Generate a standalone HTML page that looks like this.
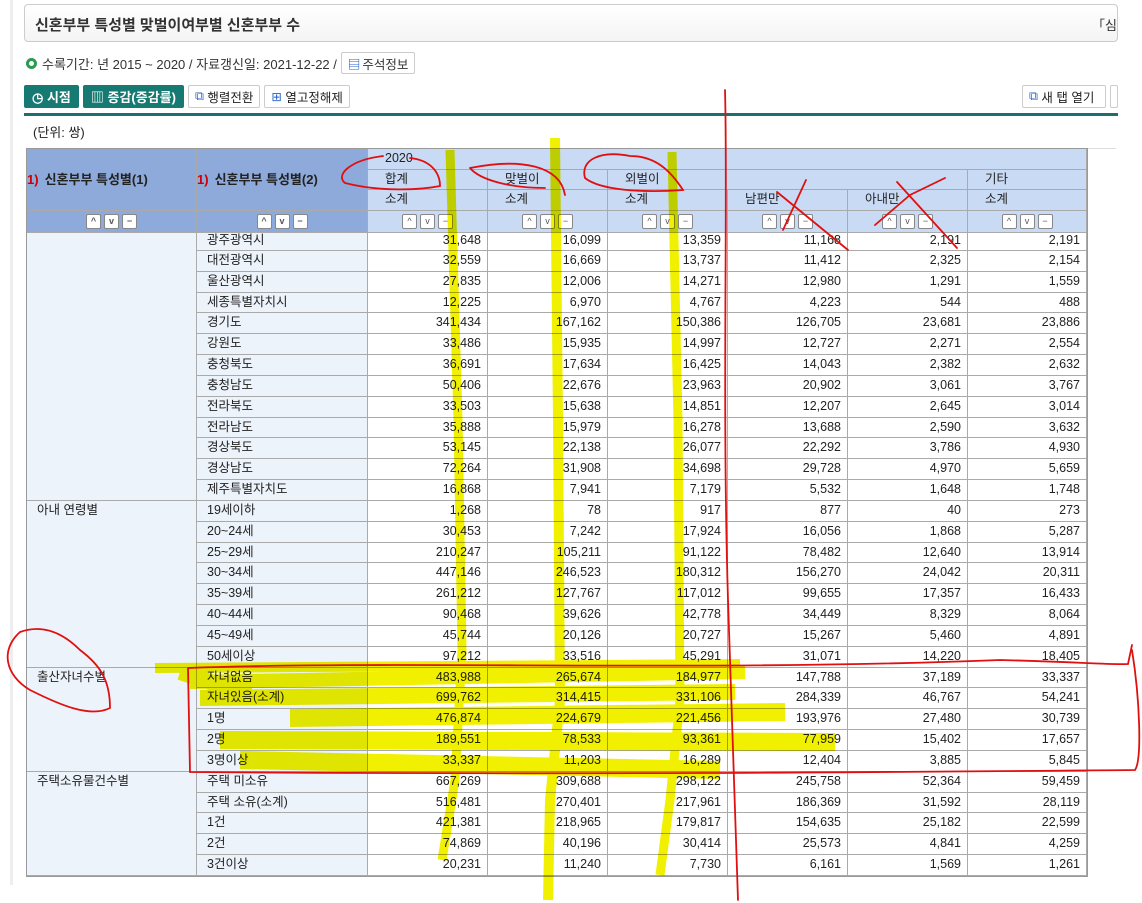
<!DOCTYPE html>
<html><head><meta charset="utf-8">
<style>
*{box-sizing:border-box;margin:0;padding:0}
body{width:1142px;height:903px;overflow:hidden;background:#fff;font-family:"Liberation Sans","Noto Sans CJK KR",sans-serif;color:#222;position:relative}
.strip{position:absolute;left:10px;top:0;width:3px;height:885px;background:#eee}
.title{position:absolute;left:24px;top:4px;width:1094px;height:38px;border:1px solid #ccc;border-radius:4px;background:linear-gradient(#fff,#f4f4f4);font-size:15px;font-weight:bold;padding:9px 10px;color:#333}
.title .r{position:absolute;right:0;top:10px;font-weight:normal;font-size:13px}
.info{position:absolute;left:26px;top:52px;font-size:13px;color:#333;display:flex;align-items:center}
.dot{width:11px;height:11px;border:3px solid #2a9a5a;border-radius:50%;margin-right:5px}
.btnw{border:1px solid #ccc;border-radius:2px;background:#fff;font-size:12.5px;padding:2px 6px;margin-left:4px;height:22px;display:inline-flex;align-items:center}
.tb{position:absolute;top:85px;display:flex;gap:4px}
.g{background:#167a73;color:#fff;font-weight:bold;font-size:13px;height:23px;padding:0 8px;display:flex;align-items:center;border-radius:2px}
.w{background:#fff;border:1px solid #ccc;font-size:12.5px;height:23px;padding:0 6px;display:flex;align-items:center;border-radius:2px}
.line{position:absolute;left:24px;top:113px;width:1094px;height:3px;background:#1d6f6e}
.unit{position:absolute;left:33px;top:122px;font-size:13px}
.hr{position:absolute;left:26px;top:148px;width:1090px;height:1px;background:#ddd}
.tbl{position:absolute;left:26px;top:148px;display:grid;grid-template-columns:170px 171px 120px 120px 120px 120px 120px 119px;grid-template-rows:21px 20px 21px 22px 18px repeat(30,20.83px);border:1px solid #999;font-size:12.5px}
.tbl>div{border-right:1px solid #aaa;border-bottom:1px solid #aaa;overflow:hidden;white-space:nowrap;line-height:19px}
.hs{background:#8eaadb;font-weight:bold;font-size:13px;display:flex;align-items:center;justify-content:flex-start}
.hs b{color:#c00;margin-right:6px}
.hd{background:#c9daf5;padding-left:17px}
.fl{display:flex;justify-content:center !important;align-items:center;gap:3px}
.fl i{width:15px;height:15px;background:#fff;border:1px solid #888;border-radius:2px;font-style:normal;font-size:9px;line-height:13px;text-align:center;color:#555}
.s1{background:#edf3fb;padding-left:10px}
.s2{background:#edf3fb;padding-left:10px}
.n{text-align:right;padding-right:6px;background:#fff}
svg{position:absolute;left:0;top:0}
.hl{mix-blend-mode:multiply}
</style></head><body>
<div class="strip"></div>
<div class="title">신혼부부 특성별 맞벌이여부별 신혼부부 수<span class="r">「심</span></div>
<div class="info"><span class="dot"></span>수록기간: 년 2015 ~ 2020 / 자료갱신일: 2021-12-22 / <span class="btnw"><span style="color:#2563c9;font-weight:bold;margin-right:2px">▤</span>주석정보</span></div>
<div class="tb" style="left:24px"><div class="g">◷ 시점</div><div class="g">▥ 증감(증감률)</div><div class="w"><span style="color:#2563c9">⧉</span>&nbsp;행렬전환</div><div class="w"><span style="color:#2563c9">⊞</span>&nbsp;열고정해제</div></div>
<div class="tb" style="left:1022px"><div class="w" style="width:84px"><span style="color:#2563c9">⧉</span>&nbsp;새 탭 열기</div><div class="w" style="width:8px;padding:0"></div></div>
<div class="line"></div>
<div class="unit">(단위: 쌍)</div>
<div class="hr"></div>
<div class="tbl">
<div class="hs" style="grid-row:1/4;grid-column:1;padding-left:0"><b>1)</b>신혼부부 특성별(1)</div>
<div class="hs" style="grid-row:1/4;grid-column:2;padding-left:0"><b>1)</b>신혼부부 특성별(2)</div>
<div class="hd" style="grid-column:3/9">2020</div>
<div class="hd">합계</div><div class="hd">맞벌이</div><div class="hd" style="grid-column:5/8">외벌이</div><div class="hd">기타</div>
<div class="hd">소계</div><div class="hd">소계</div><div class="hd">소계</div><div class="hd">남편만</div><div class="hd">아내만</div><div class="hd">소계</div>
<div class="hs fl"><i>^</i><i>v</i><i>−</i></div><div class="hs fl"><i>^</i><i>v</i><i>−</i></div>
<div class="hd fl" style="padding:0"><i>^</i><i>v</i><i>−</i></div><div class="hd fl" style="padding:0"><i>^</i><i>v</i><i>−</i></div><div class="hd fl" style="padding:0"><i>^</i><i>v</i><i>−</i></div><div class="hd fl" style="padding:0"><i>^</i><i>v</i><i>−</i></div><div class="hd fl" style="padding:0"><i>^</i><i>v</i><i>−</i></div><div class="hd fl" style="padding:0"><i>^</i><i>v</i><i>−</i></div>

<div class="s1" style="grid-row:5/18;grid-column:1"></div>
<div class="s2" style="line-height:14px">광주광역시</div><div class="n" style="line-height:14px">31,648</div><div class="n" style="line-height:14px">16,099</div><div class="n" style="line-height:14px">13,359</div><div class="n" style="line-height:14px">11,168</div><div class="n" style="line-height:14px">2,191</div><div class="n" style="line-height:14px">2,191</div>
<div class="s2">대전광역시</div><div class="n">32,559</div><div class="n">16,669</div><div class="n">13,737</div><div class="n">11,412</div><div class="n">2,325</div><div class="n">2,154</div>
<div class="s2">울산광역시</div><div class="n">27,835</div><div class="n">12,006</div><div class="n">14,271</div><div class="n">12,980</div><div class="n">1,291</div><div class="n">1,559</div>
<div class="s2">세종특별자치시</div><div class="n">12,225</div><div class="n">6,970</div><div class="n">4,767</div><div class="n">4,223</div><div class="n">544</div><div class="n">488</div>
<div class="s2">경기도</div><div class="n">341,434</div><div class="n">167,162</div><div class="n">150,386</div><div class="n">126,705</div><div class="n">23,681</div><div class="n">23,886</div>
<div class="s2">강원도</div><div class="n">33,486</div><div class="n">15,935</div><div class="n">14,997</div><div class="n">12,727</div><div class="n">2,271</div><div class="n">2,554</div>
<div class="s2">충청북도</div><div class="n">36,691</div><div class="n">17,634</div><div class="n">16,425</div><div class="n">14,043</div><div class="n">2,382</div><div class="n">2,632</div>
<div class="s2">충청남도</div><div class="n">50,406</div><div class="n">22,676</div><div class="n">23,963</div><div class="n">20,902</div><div class="n">3,061</div><div class="n">3,767</div>
<div class="s2">전라북도</div><div class="n">33,503</div><div class="n">15,638</div><div class="n">14,851</div><div class="n">12,207</div><div class="n">2,645</div><div class="n">3,014</div>
<div class="s2">전라남도</div><div class="n">35,888</div><div class="n">15,979</div><div class="n">16,278</div><div class="n">13,688</div><div class="n">2,590</div><div class="n">3,632</div>
<div class="s2">경상북도</div><div class="n">53,145</div><div class="n">22,138</div><div class="n">26,077</div><div class="n">22,292</div><div class="n">3,786</div><div class="n">4,930</div>
<div class="s2">경상남도</div><div class="n">72,264</div><div class="n">31,908</div><div class="n">34,698</div><div class="n">29,728</div><div class="n">4,970</div><div class="n">5,659</div>
<div class="s2">제주특별자치도</div><div class="n">16,868</div><div class="n">7,941</div><div class="n">7,179</div><div class="n">5,532</div><div class="n">1,648</div><div class="n">1,748</div>
<div class="s1" style="grid-row:18/26;grid-column:1">아내 연령별</div>
<div class="s2">19세이하</div><div class="n">1,268</div><div class="n">78</div><div class="n">917</div><div class="n">877</div><div class="n">40</div><div class="n">273</div>
<div class="s2">20~24세</div><div class="n">30,453</div><div class="n">7,242</div><div class="n">17,924</div><div class="n">16,056</div><div class="n">1,868</div><div class="n">5,287</div>
<div class="s2">25~29세</div><div class="n">210,247</div><div class="n">105,211</div><div class="n">91,122</div><div class="n">78,482</div><div class="n">12,640</div><div class="n">13,914</div>
<div class="s2">30~34세</div><div class="n">447,146</div><div class="n">246,523</div><div class="n">180,312</div><div class="n">156,270</div><div class="n">24,042</div><div class="n">20,311</div>
<div class="s2">35~39세</div><div class="n">261,212</div><div class="n">127,767</div><div class="n">117,012</div><div class="n">99,655</div><div class="n">17,357</div><div class="n">16,433</div>
<div class="s2">40~44세</div><div class="n">90,468</div><div class="n">39,626</div><div class="n">42,778</div><div class="n">34,449</div><div class="n">8,329</div><div class="n">8,064</div>
<div class="s2">45~49세</div><div class="n">45,744</div><div class="n">20,126</div><div class="n">20,727</div><div class="n">15,267</div><div class="n">5,460</div><div class="n">4,891</div>
<div class="s2">50세이상</div><div class="n">97,212</div><div class="n">33,516</div><div class="n">45,291</div><div class="n">31,071</div><div class="n">14,220</div><div class="n">18,405</div>
<div class="s1" style="grid-row:26/31;grid-column:1">출산자녀수별</div>
<div class="s2">자녀없음</div><div class="n">483,988</div><div class="n">265,674</div><div class="n">184,977</div><div class="n">147,788</div><div class="n">37,189</div><div class="n">33,337</div>
<div class="s2">자녀있음(소계)</div><div class="n">699,762</div><div class="n">314,415</div><div class="n">331,106</div><div class="n">284,339</div><div class="n">46,767</div><div class="n">54,241</div>
<div class="s2">1명</div><div class="n">476,874</div><div class="n">224,679</div><div class="n">221,456</div><div class="n">193,976</div><div class="n">27,480</div><div class="n">30,739</div>
<div class="s2">2명</div><div class="n">189,551</div><div class="n">78,533</div><div class="n">93,361</div><div class="n">77,959</div><div class="n">15,402</div><div class="n">17,657</div>
<div class="s2">3명이상</div><div class="n">33,337</div><div class="n">11,203</div><div class="n">16,289</div><div class="n">12,404</div><div class="n">3,885</div><div class="n">5,845</div>
<div class="s1" style="grid-row:31/36;grid-column:1">주택소유물건수별</div>
<div class="s2">주택 미소유</div><div class="n">667,269</div><div class="n">309,688</div><div class="n">298,122</div><div class="n">245,758</div><div class="n">52,364</div><div class="n">59,459</div>
<div class="s2">주택 소유(소계)</div><div class="n">516,481</div><div class="n">270,401</div><div class="n">217,961</div><div class="n">186,369</div><div class="n">31,592</div><div class="n">28,119</div>
<div class="s2">1건</div><div class="n">421,381</div><div class="n">218,965</div><div class="n">179,817</div><div class="n">154,635</div><div class="n">25,182</div><div class="n">22,599</div>
<div class="s2">2건</div><div class="n">74,869</div><div class="n">40,196</div><div class="n">30,414</div><div class="n">25,573</div><div class="n">4,841</div><div class="n">4,259</div>
<div class="s2">3건이상</div><div class="n">20,231</div><div class="n">11,240</div><div class="n">7,730</div><div class="n">6,161</div><div class="n">1,569</div><div class="n">1,261</div>
</div>

<svg width="1142" height="903" viewBox="0 0 1142 903" class="hl">
<g stroke="#f0f000" fill="none" stroke-linecap="butt">
<path d="M450 150 L458 420 L462 650 L455 780 L442 860" stroke-width="9"/>
<path d="M555 138 L558 420 L560 700 L550 800 L548 900" stroke-width="10"/>
<path d="M672 152 L678 420 L680 700 L670 800 L660 875" stroke-width="9"/>
<path d="M155 668 L740 664" stroke-width="10"/>
<path d="M190 682 L745 672" stroke-width="14"/>
<path d="M200 698 L735 692" stroke-width="16"/>
<path d="M290 718 L785 712" stroke-width="18"/>
<path d="M220 740 L835 742" stroke-width="18"/>
<path d="M240 760 L720 770" stroke-width="18"/>
<path d="M180 672 L250 695" stroke-width="16"/>
</g>
</svg>
<svg width="1142" height="903" viewBox="0 0 1142 903">
<g stroke="#e01010" stroke-width="1.8" fill="none" stroke-linecap="round">
<path d="M725 90 C728 200 722 400 728 600 C732 700 735 800 738 900"/>
<path d="M188 668 C400 660 700 672 1000 660 C1080 662 1110 665 1128 664 L1132 645 M1132 650 C1140 700 1142 760 1135 770 C900 772 600 775 190 772 L188 668"/>
<path d="M110 708 C90 718 60 705 30 690 C5 675 0 650 20 632 C40 625 60 630 80 650 C100 665 110 680 110 708"/>
<path d="M383 156 C350 160 335 175 345 183 C380 192 420 190 440 186 C440 172 430 160 410 158"/>
<path d="M470 168 C520 158 560 165 565 195 M470 168 C480 180 510 188 545 188"/>
<path d="M630 156 C600 150 580 160 585 178 C600 190 640 193 683 190 C670 170 655 156 630 156"/>
<path d="M777 192 L848 250 M783 230 L806 180"/>
<path d="M897 182 L957 248 M875 225 L910 195 L945 178"/>
</g>
</svg>
</body></html>
